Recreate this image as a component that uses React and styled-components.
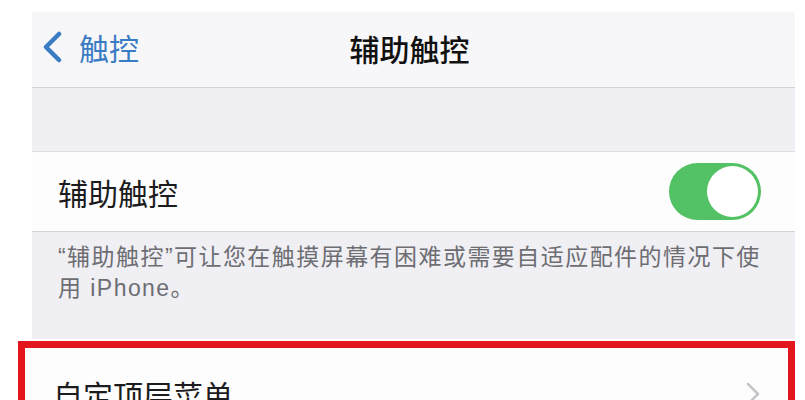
import styled, { createGlobalStyle } from "styled-components";

const colors = {
  page: "#ffffff",
  nav: "#f7f7f9",
  group: "#efeff4",
  cell: "#fdfdfd",
  hairline: "#d2d2d7",
  blue: "#3a7cc4",
  green: "#53c265",
  red: "#e3161d",
  footer: "#6d6d72",
  chevron: "#c4c4c9",
};

const GlobalStyle = createGlobalStyle`
  html, body {
    margin: 0;
    padding: 0;
    background: ${colors.page};
    font-family: "Noto Sans CJK SC", "Noto Sans", sans-serif;
    color: #1c1c1e;
  }
`;

export default function App() {
  return (
    <>
      <GlobalStyle />
      <Page>
        <Screen>
          <NavBar>
            <BackButton>
              <svg width="22" height="32" viewBox="0 0 22 32">
                <polyline
                  points="18,3 5,16 18,29"
                  fill="none"
                  stroke={colors.blue}
                  strokeWidth="4.5"
                  strokeLinecap="round"
                  strokeLinejoin="round"
                />
              </svg>
              <BackLabel>触控</BackLabel>
            </BackButton>
            <NavTitle>辅助触控</NavTitle>
          </NavBar>

          <GroupSpacer />

          <Cell>
            <CellLabel>辅助触控</CellLabel>
            <Switch $on />
          </Cell>

          <Footer>“辅助触控”可让您在触摸屏幕有困难或需要自适应配件的情况下使用 iPhone。</Footer>

          <Highlight>
            <Cell $plain>
              <CellLabel>自定顶层菜单</CellLabel>
              <svg width="16" height="26" viewBox="0 0 16 26">
                <polyline
                  points="3,3 13,13 3,23"
                  fill="none"
                  stroke={colors.chevron}
                  strokeWidth="2.5"
                  strokeLinecap="round"
                  strokeLinejoin="round"
                />
              </svg>
            </Cell>
          </Highlight>
        </Screen>
      </Page>
    </>
  );
}

const Page = styled.div`
  width: 805px;
  height: 400px;
  overflow: hidden;
  box-sizing: border-box;
  padding: 12px 10px 0 32px;
`;

const Screen = styled.div`
  display: flex;
  flex-direction: column;
`;

const NavBar = styled.div`
  position: relative;
  height: 76px;
  background: ${colors.nav};
  border-bottom: 1px solid ${colors.hairline};
  display: flex;
  align-items: center;
  justify-content: center;
  padding-bottom: 4px;
  box-sizing: border-box;
`;

const BackButton = styled.div`
  position: absolute;
  left: 9px;
  top: 19px;
  display: flex;
  align-items: center;
  gap: 16px;
`;

const BackLabel = styled.span`
  font-size: 30px;
  line-height: 32px;
  color: ${colors.blue};
`;

const NavTitle = styled.div`
  font-size: 30px;
  font-weight: 500;
  color: #111;
  margin-left: -8px;
`;

const GroupSpacer = styled.div`
  height: 63px;
  background: ${colors.group};
  border-bottom: 1px solid #dcdce1;
`;

const Cell = styled.div`
  height: 80px;
  display: flex;
  align-items: center;
  justify-content: space-between;
  padding: 0 34px 0 26px;
  background: ${colors.cell};
  border-bottom: ${({ $plain }) => ($plain ? "none" : `1px solid ${colors.hairline}`)};
  box-sizing: border-box;
  flex-shrink: 0;
`;

const CellLabel = styled.span`
  font-size: 30px;
  color: #1c1c1e;
`;

const Switch = styled.div`
  position: relative;
  width: 92px;
  height: 57px;
  border-radius: 29px;
  background: ${({ $on }) => ($on ? colors.green : "#e5e5ea")};

  &::after {
    content: "";
    position: absolute;
    top: 3px;
    ${({ $on }) => ($on ? "right: 3px;" : "left: 3px;")}
    width: 51px;
    height: 51px;
    border-radius: 50%;
    background: #fff;
  }
`;

const Footer = styled.div`
  background: ${colors.group};
  padding: 10px 27px 0 26px;
  height: 107px;
  box-sizing: border-box;
  font-family: "Liberation Sans", "Noto Sans CJK SC", sans-serif;
  font-size: 23px;
  letter-spacing: 1.45px;
  line-height: 31px;
  color: ${colors.footer};
`;

const Highlight = styled.div`
  margin-top: 2px;
  margin-left: -14px;
  border: 7px solid ${colors.red};
  background: #fff;

  & > div {
    padding-left: 28px;
    padding-right: 27px;
    padding-top: 12px;
  }
`;
